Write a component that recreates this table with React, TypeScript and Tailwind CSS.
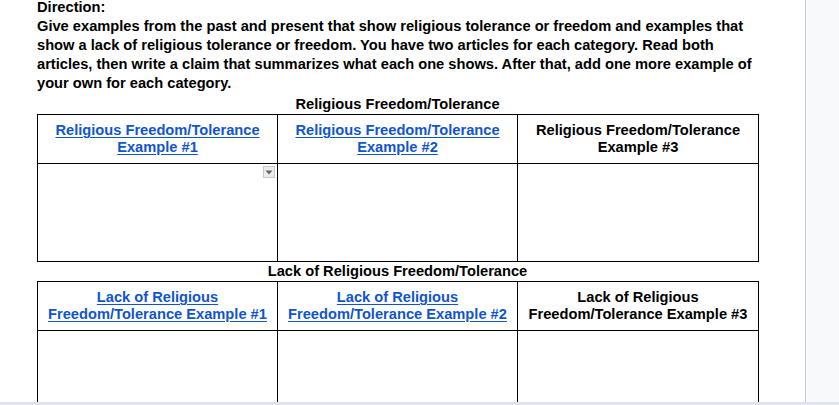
const freedomHeads = [
  { label: "Religious Freedom/Tolerance Example #1", link: true },
  { label: "Religious Freedom/Tolerance Example #2", link: true },
  { label: "Religious Freedom/Tolerance Example #3", link: false },
];

const lackHeads = [
  { label: "Lack of Religious Freedom/Tolerance Example #1", link: true },
  { label: "Lack of Religious Freedom/Tolerance Example #2", link: true },
  { label: "Lack of Religious Freedom/Tolerance Example #3", link: false },
];

function DropdownChip() {
  return (
    <div className="absolute top-[2px] right-[2px] w-[12px] h-[12px] bg-[#ececec] border border-[#c9c9c9] flex items-center justify-center">
      <svg width="8" height="5" viewBox="0 0 8 5">
        <path d="M0.5 0.5 L7.5 0.5 L4 4.5 Z" fill="#666" />
      </svg>
    </div>
  );
}

function ExampleTable({
  heads,
  withChip,
}: {
  heads: { label: string; link: boolean }[];
  withChip?: boolean;
}) {
  return (
    <table className="w-[721px] table-fixed border-collapse">
      <colgroup>
        <col className="w-[240px]" />
        <col className="w-[240px]" />
        <col className="w-[241px]" />
      </colgroup>
      <tbody>
        <tr>
          {heads.map((h) => (
            <td
              key={h.label}
              className="border border-black px-[5px] pt-[7px] pb-[7px] text-center align-top leading-[17px]"
            >
              {h.link ? (
                <a href="#" className="text-[#1155cc] underline underline-offset-[2px]">
                  {h.label}
                </a>
              ) : (
                <span>{h.label}</span>
              )}
            </td>
          ))}
        </tr>
        <tr>
          {heads.map((h, i) => (
            <td key={h.label} className="relative border border-black h-[98px] p-0">
              {withChip && i === 0 && <DropdownChip />}
            </td>
          ))}
        </tr>
      </tbody>
    </table>
  );
}

export default function App() {
  return (
    <div
      className="w-[839px] h-[405px] flex flex-col overflow-hidden bg-white text-black"
      style={{ fontFamily: "'Liberation Sans', Arial, sans-serif" }}
    >
      <div className="flex flex-1 min-h-0">
        {/* Document page */}
        <div className="w-[805px] overflow-hidden bg-white">
          <div className="ml-[37px] -mt-[2px] w-[721px] text-[14.67px] font-bold leading-[19px]">
            <p>Direction:</p>
            <p>
              Give examples from the past and present that show religious tolerance or freedom and
              examples that show a lack of religious tolerance or freedom. You have two articles for
              each category. Read both articles, then write a claim that summarizes what each one
              shows. After that, add one more example of your own for each category.
            </p>
            <p className="mt-[2px] text-center">Religious Freedom/Tolerance</p>
            <ExampleTable heads={freedomHeads} withChip />
            <p className="text-center">Lack of Religious Freedom/Tolerance</p>
            <ExampleTable heads={lackHeads} />
          </div>
        </div>

        {/* Right gutter */}
        <div className="flex-1 border-l border-[#c7c7c7] bg-[#f8f9fa]" />
      </div>
      <div className="h-[3px] bg-[#e1e3ea]" />
    </div>
  );
}
